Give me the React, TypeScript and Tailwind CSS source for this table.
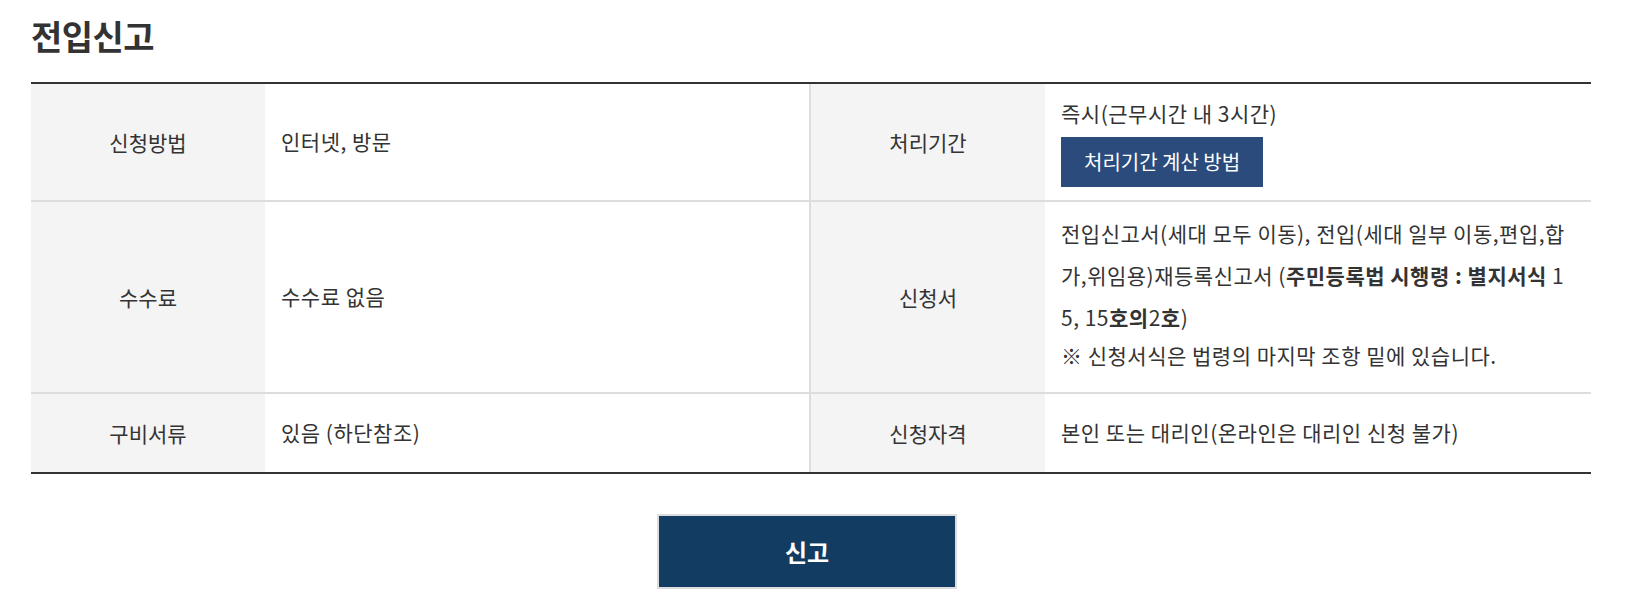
import React from 'react';

const font = "font-['Noto_Sans_CJK_KR','Noto_Sans',sans-serif]";

const Th: React.FC<{ children: React.ReactNode; last?: boolean }> = ({ children, last }) => (
  <div
    className={`flex items-center justify-center bg-[#f4f4f4] py-[18px] text-[21px] leading-[42px] text-[#333] ${
      last ? '' : 'border-b-2 border-[#ddd]'
    }`}
  >
    {children}
  </div>
);

const Td: React.FC<{ children: React.ReactNode; last?: boolean; divider?: boolean }> = ({ children, last, divider }) => (
  <div
    className={`flex flex-col justify-center bg-white px-4 pt-[10px] pb-[12px] text-[21px] leading-[42px] tracking-[0.5px] text-[#333] break-all ${
      last ? '' : 'border-b-2 border-[#ddd]'
    } ${divider ? 'border-r-2 border-r-[#ddd]' : ''}`}
  >
    {children}
  </div>
);

export default function App() {
  return (
    <div className={`${font} bg-white pt-[12px] pl-[31px]`}>
      <h2 className="text-[34px] font-bold leading-[48px] tracking-[-0.5px] text-[#333]">전입신고</h2>

      <div className="mt-[22px] w-[1560px] border-y-2 border-[#333]">
        <div className="grid grid-cols-[234px_546px_234px_546px]">
          <Th>신청방법</Th>
          <Td divider>인터넷, 방문</Td>
          <Th>처리기간</Th>
          <Td>
            <p className="leading-[38px]">즉시(근무시간 내 3시간)</p>
            <div className="mt-[5px] mb-px">
              <button className="h-[50px] bg-[#2a4b7c] px-[23px] text-[20px] tracking-normal text-white">
                처리기간 계산 방법
              </button>
            </div>
          </Td>

          <Th>수수료</Th>
          <Td divider>수수료 없음</Td>
          <Th>신청서</Th>
          <Td>
            <p>
              전입신고서(세대 모두 이동), 전입(세대 일부 이동,편입,합가,위임용)재등록신고서 (
              <strong className="font-bold">주민등록법 시행령 : 별지서식</strong> 15, 15
              <strong className="font-bold">호의</strong>2<strong className="font-bold">호</strong>)
            </p>
            <p className="pb-[8px] leading-[34px]">※ 신청서식은 법령의 마지막 조항 밑에 있습니다.</p>
          </Td>

          <Th last>구비서류</Th>
          <Td last divider>
            있음 (하단참조)
          </Td>
          <Th last>신청자격</Th>
          <Td last>본인 또는 대리인(온라인은 대리인 신청 불가)</Td>
        </div>
      </div>

      <div className="flex w-[1560px] justify-center pr-2 pt-[40px] pb-[20px]">
        <button className="h-[75px] w-[300px] border-2 border-[#dddddd] bg-[#123c62] text-[24px] font-bold text-white">
          신고
        </button>
      </div>
    </div>
  );
}
